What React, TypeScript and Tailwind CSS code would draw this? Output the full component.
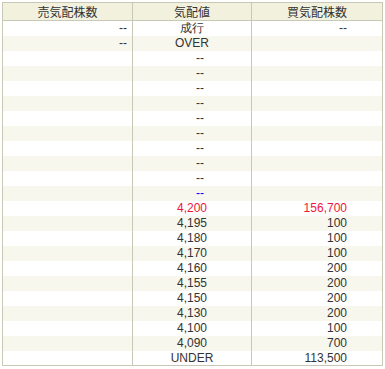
const ROWS: { sell: string; price: string; buy: string; tone?: 'red' | 'blue' }[] = [
  { sell: '--', price: '成行', buy: '--' },
  { sell: '--', price: 'OVER', buy: '' },
  ...Array.from({ length: 9 }, () => ({ sell: '', price: '--', buy: '' })),
  { sell: '', price: '--', buy: '', tone: 'blue' as const },
  { sell: '', price: '4,200', buy: '156,700', tone: 'red' as const },
  { sell: '', price: '4,195', buy: '100' },
  { sell: '', price: '4,180', buy: '100' },
  { sell: '', price: '4,170', buy: '100' },
  { sell: '', price: '4,160', buy: '200' },
  { sell: '', price: '4,155', buy: '200' },
  { sell: '', price: '4,150', buy: '200' },
  { sell: '', price: '4,130', buy: '200' },
  { sell: '', price: '4,100', buy: '100' },
  { sell: '', price: '4,090', buy: '700' },
  { sell: '', price: 'UNDER', buy: '113,500' },
];

const TONE_CLASS = {
  red: 'text-[#f0143c]',
  blue: 'text-[#0000ff]',
};

export default function App() {
  return (
    <div className="bg-white w-[385px] h-[369px] pt-[2px] pl-[2px]">
      <table className="table-fixed border-collapse w-[381px] border border-[#c8c8b6] text-[12px] leading-none text-[#333] font-['Liberation_Sans',Arial,sans-serif]">
        <colgroup>
          <col className="w-[130px]" />
          <col className="w-[119px]" />
          <col className="w-[131px]" />
        </colgroup>
        <thead>
          <tr className="h-[18px] bg-[#f1f1de] font-['Noto_Sans_CJK_JP',sans-serif]">
            <th className="border border-[#c8c8b6] font-normal p-0 text-center">売気配株数</th>
            <th className="border border-[#c8c8b6] font-normal p-0 text-center">気配値</th>
            <th className="border border-[#c8c8b6] font-normal p-0 text-center">買気配株数</th>
          </tr>
        </thead>
        <tbody>
          {ROWS.map((row, i) => {
            const tone = row.tone ? TONE_CLASS[row.tone] : '';
            // empty price levels sit a bit right of the column centre
            const dash = row.price === '--' ? 'pl-[16px]' : '';
            return (
              <tr key={i} className={`h-[15px] ${i % 2 === 1 ? 'bg-[#f7f7ed]' : 'bg-white'}`}>
                <td className="p-0 pr-[5px] text-right border-r border-[#c8c8b6]">{row.sell}</td>
                <td className={`p-0 text-center border-r border-[#c8c8b6] ${dash} ${tone}`}>{row.price}</td>
                <td className={`p-0 pr-[35px] text-right ${tone}`}>{row.buy}</td>
              </tr>
            );
          })}
        </tbody>
      </table>
    </div>
  );
}
